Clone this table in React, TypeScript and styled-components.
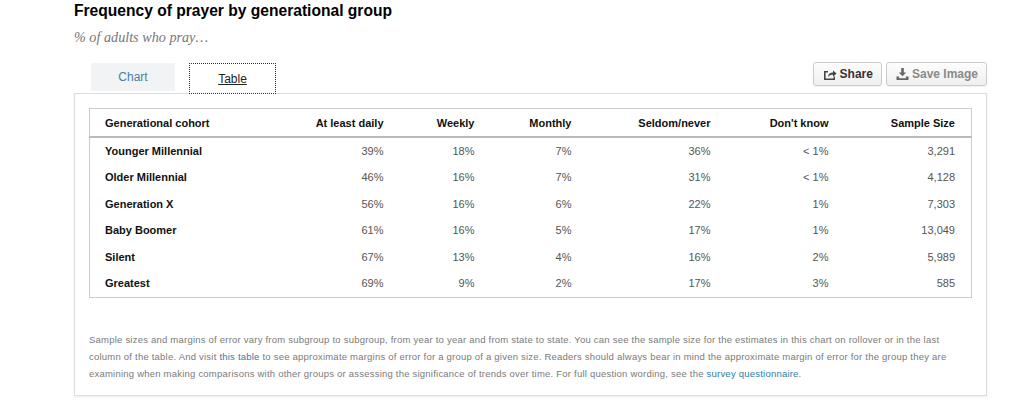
import React from "react";
import styled, { createGlobalStyle } from "styled-components";

const Global = createGlobalStyle`
  html, body { margin: 0; padding: 0; background: #fff; }
  body { font-family: "Liberation Sans", Arial, sans-serif; }
`;

const Page = styled.div`
  width: 1024px;
  height: 408px;
  padding-left: 74px;
  box-sizing: border-box;
  overflow: hidden;
`;

const Wrap = styled.div`
  width: 913px;
`;

const Title = styled.h1`
  margin: 0;
  padding-top: 1px;
  font-size: 15.6px;
  line-height: 20px;
  font-weight: 700;
  color: #000;
`;

const Subtitle = styled.p`
  margin: 8px 0 0;
  font-family: "Liberation Serif", "Times New Roman", serif;
  font-style: italic;
  font-size: 14.2px;
  line-height: 16px;
  color: #777;
`;

const TopBar = styled.div`
  display: flex;
  align-items: flex-start;
  margin-top: 18px;
  height: 31px;
  position: relative;
  z-index: 1;
`;

const Tab = styled.button<{ $active?: boolean }>`
  box-sizing: border-box;
  height: ${(p) => (p.$active ? "31px" : "28px")};
  width: ${(p) => (p.$active ? "87px" : "84px")};
  margin-left: ${(p) => (p.$active ? "14px" : "17px")};
  background: ${(p) => (p.$active ? "#fff" : "#f1f3f4")};
  border: ${(p) => (p.$active ? "1px dotted #333" : "none")};
  font-family: "Liberation Sans", Arial, sans-serif;
  font-size: 12px;
  color: ${(p) => (p.$active ? "#222" : "#4a7fa0")};
  text-decoration: ${(p) => (p.$active ? "underline" : "none")};
  padding: 0;
  padding-top: ${(p) => (p.$active ? "1px" : "0")};
  cursor: pointer;
`;

const Actions = styled.div`
  margin-left: auto;
  display: flex;
  gap: 4px;
  margin-top: -1px;
`;

const ActionButton = styled.button<{ $muted?: boolean }>`
  box-sizing: border-box;
  height: 24px;
  display: flex;
  align-items: center;
  gap: 3px;
  padding: 0 8px 0 9px;
  border: 1px solid #ccc;
  border-radius: 3px;
  background: linear-gradient(#fdfdfd, #efefef);
  box-shadow: 0 1px 1px rgba(0, 0, 0, 0.06);
  font-family: "Liberation Sans", Arial, sans-serif;
  font-weight: 700;
  font-size: 12px;
  color: ${(p) => (p.$muted ? "#8a8a8a" : "#333")};
  cursor: pointer;
  svg { display: block; }
`;

const Panel = styled.div`
  margin-top: -1px;
  border: 1px solid #ddd;
  box-shadow: 0 1px 2px rgba(0, 0, 0, 0.08);
  padding: 14px 15px 0 14px;
  height: 303px;
  box-sizing: border-box;
`;

const Table = styled.table`
  width: 883px;
  table-layout: fixed;
  border-collapse: collapse;
  border: 1px solid #ccc;
  font-size: 11px;
`;

const Th = styled.th<{ $left?: boolean; $w?: number }>`
  box-sizing: border-box;
  text-align: ${(p) => (p.$left ? "left" : "right")};
  font-weight: 700;
  color: #111;
  height: 28px;
  padding: 1px 0 0;
  padding-left: ${(p) => (p.$left ? "15px" : "0")};
  padding-right: ${(p) => (p.$left ? "0" : "16px")};
  width: ${(p) => (p.$w ? `${p.$w}px` : "auto")};
  border-bottom: 2px solid #bbb;
  vertical-align: middle;
  white-space: nowrap;
`;

const Td = styled.td<{ $left?: boolean }>`
  text-align: ${(p) => (p.$left ? "left" : "right")};
  font-weight: ${(p) => (p.$left ? 700 : 400)};
  color: ${(p) => (p.$left ? "#111" : "#555")};
  height: 26.5px;
  padding: 0;
  padding-left: ${(p) => (p.$left ? "15px" : "0")};
  padding-right: ${(p) => (p.$left ? "0" : "16px")};
  vertical-align: middle;
  white-space: nowrap;
`;

const Note = styled.p`
  margin: 33px 0 0;
  font-size: 9.5px;
  line-height: 17px;
  color: #7a7a7a;
  letter-spacing: 0.22px;
`;

const Link = styled.a`
  color: #2b7ea8;
  text-decoration: none;
`;

const ShareIcon = () => (
  <svg width="14" height="12" viewBox="0 0 14 12">
    <path d="M1 3h4v1.6H2.6v5.8h8V8.6H12V12H1z" fill="#444" />
    <path d="M5 9c0-3 2-4.6 5-4.6V2.4L13.6 5.6 10 8.8V6.8C7.8 6.8 6.2 7.4 5 9z" fill="#444" />
  </svg>
);

const DownloadIcon = () => (
  <svg width="13" height="12" viewBox="0 0 13 12">
    <path d="M5.2 0h2.6v4.4h2.4L6.5 8.2 2.8 4.4h2.4z" fill="#666" />
    <path d="M0.5 8.4h2.6v1.8h6.8V8.4h2.6V12H0.5z" fill="#666" />
  </svg>
);

const rows = [
  ["Younger Millennial", "39%", "18%", "7%", "36%", "< 1%", "3,291"],
  ["Older Millennial", "46%", "16%", "7%", "31%", "< 1%", "4,128"],
  ["Generation X", "56%", "16%", "6%", "22%", "1%", "7,303"],
  ["Baby Boomer", "61%", "16%", "5%", "17%", "1%", "13,049"],
  ["Silent", "67%", "13%", "4%", "16%", "2%", "5,989"],
  ["Greatest", "69%", "9%", "2%", "17%", "3%", "585"],
];

const headers: { label: string; w?: number }[] = [
  { label: "Generational cohort" },
  { label: "At least daily", w: 99 },
  { label: "Weekly", w: 91 },
  { label: "Monthly", w: 97 },
  { label: "Seldom/never", w: 139 },
  { label: "Don't know", w: 118 },
  { label: "Sample Size", w: 127 },
];

export default function App() {
  return (
    <Page>
      <Global />
      <Wrap>
        <Title>Frequency of prayer by generational group</Title>
        <Subtitle>% of adults who pray…</Subtitle>
        <TopBar>
          <Tab>Chart</Tab>
          <Tab $active>Table</Tab>
          <Actions>
            <ActionButton>
              <ShareIcon />
              Share
            </ActionButton>
            <ActionButton $muted>
              <DownloadIcon />
              Save Image
            </ActionButton>
          </Actions>
        </TopBar>
        <Panel>
          <Table>
            <thead>
              <tr>
                {headers.map((h, i) => (
                  <Th key={h.label} $left={i === 0} $w={h.w}>
                    {h.label}
                  </Th>
                ))}
              </tr>
            </thead>
            <tbody>
              {rows.map((r) => (
                <tr key={r[0]}>
                  {r.map((c, i) => (
                    <Td key={i} $left={i === 0}>
                      {c}
                    </Td>
                  ))}
                </tr>
              ))}
            </tbody>
          </Table>
          <Note>
            Sample sizes and margins of error vary from subgroup to subgroup, from year to year and from state to state. You can see the sample size for the estimates in this chart on rollover or in the last column of the table. And visit <Link href="#">this table</Link> to see approximate margins of error for a group of a given size. Readers should always bear in mind the approximate margin of error for the group they are examining when making comparisons with other groups or assessing the significance of trends over time. For full question wording, see the <Link href="#">survey questionnaire</Link>.
          </Note>
        </Panel>
      </Wrap>
    </Page>
  );
}
